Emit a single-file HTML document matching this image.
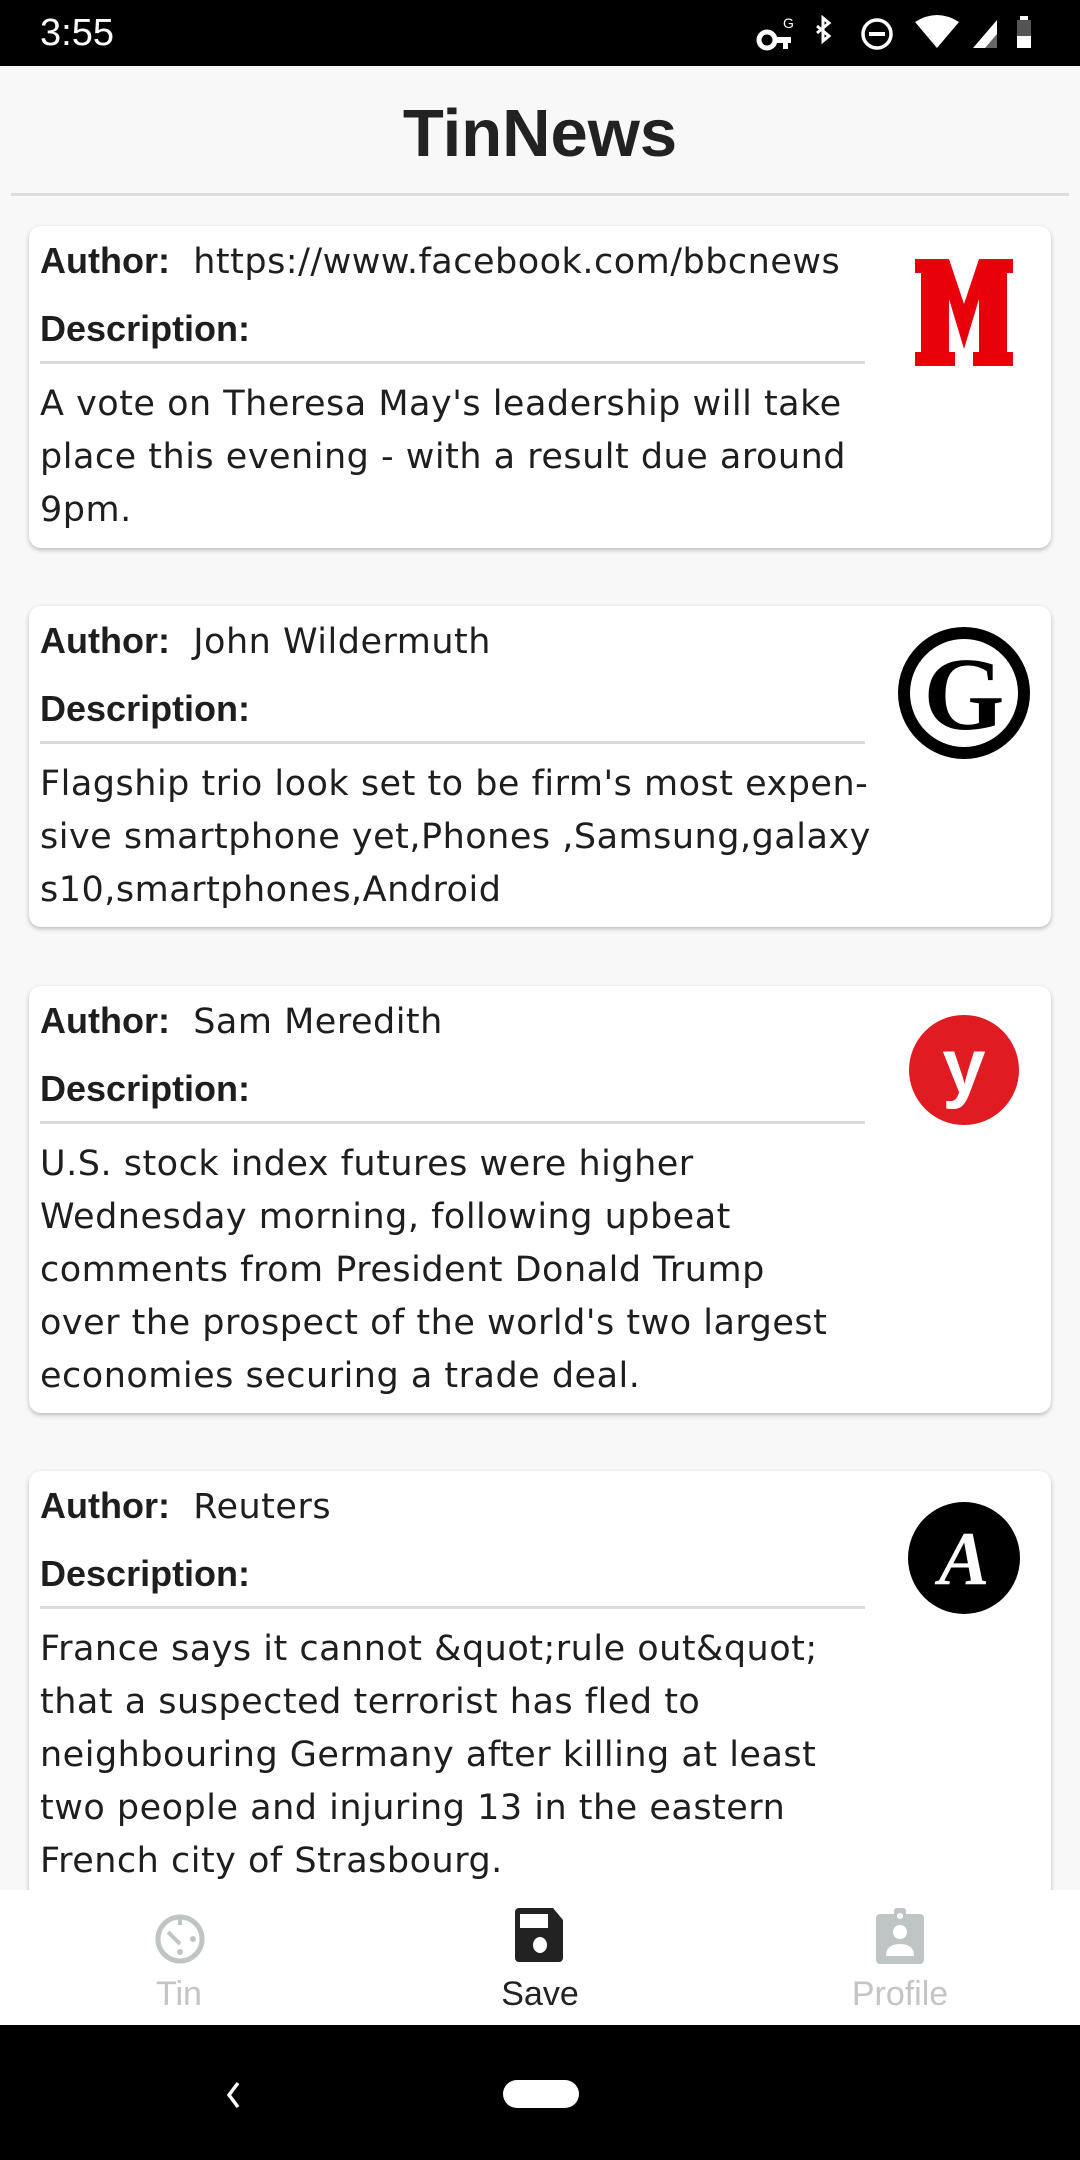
<!DOCTYPE html>
<html><head><meta charset="utf-8"><style>
*{margin:0;padding:0;box-sizing:border-box}
body{width:1080px;height:2160px;background:#f8f8f8;position:relative;overflow:hidden;font-family:"Liberation Sans","DejaVu Sans",sans-serif;color:#1e1e1e}
.abs{position:absolute}
.status{left:0;top:0;width:1080px;height:66px;background:#000;color:#fff}
.title{left:0;width:1080px;top:96px;text-align:center;font-size:67px;font-weight:bold;line-height:76px;color:#222}
.hr{left:11px;top:193px;width:1058px;height:3px;background:#dcdcdc}
.card{left:29px;width:1022px;background:#fff;border-radius:12px;box-shadow:0 2px 5px rgba(0,0,0,.25)}
.t{position:absolute;left:11px;font-size:35px;line-height:53px;white-space:nowrap;font-family:"DejaVu Sans",sans-serif;letter-spacing:0.5px}
.b{font-weight:bold;font-family:"Liberation Sans",sans-serif;font-size:36px;letter-spacing:0}
.div{position:absolute;left:11px;width:825px;height:3px;background:#dcdcdc}
.nav{left:0;top:1890px;width:1080px;height:135px;background:#fff}
.lbl{position:absolute;font-size:34px;top:1975px;width:200px;text-align:center}
</style></head><body>
<div class="abs status">
 <div class="abs" style="left:40px;top:10px;font-size:38px;line-height:46px">3:55</div>
 <svg class="abs" style="left:755px;top:12px" width="300" height="44" viewBox="0 0 300 44">
  <circle cx="12" cy="28" r="8" fill="none" stroke="#fff" stroke-width="5"/><rect x="18" y="25" width="18" height="6" fill="#fff"/><rect x="28" y="25" width="5" height="12" fill="#fff"/>
  <text x="28" y="16" fill="#fff" font-size="14" font-family="Liberation Sans">G</text>
  <path d="M62 14l12 10-6 5V6l6 5-12 10" fill="none" stroke="#fff" stroke-width="3"/>
  <circle cx="122" cy="22" r="14" fill="none" stroke="#fff" stroke-width="3.5"/><rect x="114" y="20" width="16" height="4" fill="#fff"/>
  <path d="M160 10q22-14 44 0l-22 26z" fill="#fff"/>
  <path d="M218 36l24-28v28z" fill="#fff"/><path d="M230 36l12-14v14z" fill="#666"/>
  <rect x="265" y="4" width="8" height="4" fill="#fff"/><rect x="262" y="8" width="14" height="28" fill="#555"/><rect x="262" y="24" width="14" height="12" fill="#fff"/>
 </svg>
</div>
<div class="abs title">TinNews</div>
<div class="abs hr"></div>

<div class="abs card" style="top:226px;height:322px">
 <div class="t" style="top:8px"><span class="b">Author:</span>&nbsp;&nbsp;https://www.facebook.com/bbcnews</div>
 <div class="t b" style="top:76px">Description:</div>
 <div class="div" style="top:135px"></div>
 <div class="t" style="top:152px">A vote on Theresa May's leadership will take<br>place this evening - with a result due around<br>9pm.</div>
 <svg class="abs" style="left:886px;top:33px" width="98" height="107" viewBox="0 0 98 107"><path d="M0 0h34l15 45 15-45h34v14h-6v79h6v14H58V93h6V40L49 90 34 40v53h6v14H0V93h6V14H0z" fill="#e8000a"/></svg>
</div>

<div class="abs card" style="top:606px;height:321px">
 <div class="t" style="top:8px"><span class="b">Author:</span>&nbsp;&nbsp;John Wildermuth</div>
 <div class="t b" style="top:76px">Description:</div>
 <div class="div" style="top:135px"></div>
 <div class="t" style="top:152px">Flagship trio look set to be firm's most expen-<br>sive smartphone yet,Phones ,Samsung,galaxy<br>s10,smartphones,Android</div>
 <svg class="abs" style="left:869px;top:21px" width="132" height="132" viewBox="0 0 132 132"><circle cx="66" cy="66" r="66" fill="#000"/><circle cx="66" cy="66" r="54" fill="#fff"/><text x="66" y="102" text-anchor="middle" font-size="104" font-weight="bold" font-family="Liberation Serif" fill="#000">G</text></svg>
</div>

<div class="abs card" style="top:986px;height:427px">
 <div class="t" style="top:8px"><span class="b">Author:</span>&nbsp;&nbsp;Sam Meredith</div>
 <div class="t b" style="top:76px">Description:</div>
 <div class="div" style="top:135px"></div>
 <div class="t" style="top:152px">U.S. stock index futures were higher<br>Wednesday morning, following upbeat<br>comments from President Donald Trump<br>over the prospect of the world's two largest<br>economies securing a trade deal.</div>
 <svg class="abs" style="left:880px;top:29px" width="110" height="110" viewBox="0 0 110 110"><circle cx="55" cy="55" r="55" fill="#e11b22"/><text x="55" y="78" text-anchor="middle" font-size="78" font-weight="bold" font-family="Liberation Sans" fill="#fff">y</text></svg>
</div>

<div class="abs card" style="top:1471px;height:460px">
 <div class="t" style="top:8px"><span class="b">Author:</span>&nbsp;&nbsp;Reuters</div>
 <div class="t b" style="top:76px">Description:</div>
 <div class="div" style="top:135px"></div>
 <div class="t" style="top:152px">France says it cannot &amp;quot;rule out&amp;quot;<br>that a suspected terrorist has fled to<br>neighbouring Germany after killing at least<br>two people and injuring 13 in the eastern<br>French city of Strasbourg.</div>
 <svg class="abs" style="left:879px;top:31px" width="112" height="112" viewBox="0 0 112 112"><circle cx="56" cy="56" r="56" fill="#000"/><text x="56" y="82" text-anchor="middle" font-size="76" font-weight="bold" font-style="italic" font-family="Liberation Serif" fill="#fff">A</text></svg>
</div>

<div class="abs nav"></div>
<svg class="abs" style="left:154px;top:1912px" width="52" height="52" viewBox="0 0 52 52"><circle cx="26" cy="27" r="22" fill="none" stroke="#bfc4c4" stroke-width="5"/><path d="M26 5v8M14 20l12 12" stroke="#bfc4c4" stroke-width="4"/><circle cx="26" cy="40" r="3" fill="#bfc4c4"/><circle cx="39" cy="27" r="3" fill="#bfc4c4"/></svg>
<div class="lbl" style="left:79px;color:#c4c4c4">Tin</div>
<svg class="abs" style="left:514px;top:1908px" width="52" height="54" viewBox="0 0 52 54"><path d="M5 0h34l10 12v38a4 4 0 0 1-4 4H5a4 4 0 0 1-4-4V4a4 4 0 0 1 4-4z" fill="#222"/><rect x="6" y="6" width="28" height="14" fill="#fff"/><ellipse cx="26" cy="37" rx="7" ry="8" fill="#fff"/></svg>
<div class="lbl" style="left:440px;color:#222">Save</div>
<svg class="abs" style="left:874px;top:1908px" width="52" height="56" viewBox="0 0 52 56"><rect x="2" y="6" width="48" height="50" rx="4" fill="#bfc4c4"/><rect x="20" y="0" width="12" height="10" rx="3" fill="#bfc4c4"/><circle cx="26" cy="8" r="3" fill="#fff"/><circle cx="26" cy="24" r="7" fill="#fff"/><path d="M12 48q0-12 14-12t14 12z" fill="#fff"/></svg>
<div class="lbl" style="left:800px;color:#c4c4c4">Profile</div>

<div class="abs" style="left:0;top:2025px;width:1080px;height:135px;background:#000"></div>
<svg class="abs" style="left:224px;top:2080px" width="20" height="30" viewBox="0 0 20 30"><path d="M14 3L5 15l9 12" fill="none" stroke="#fff" stroke-width="3.5"/></svg>
<div class="abs" style="left:503px;top:2080px;width:76px;height:28px;border-radius:14px;background:#fff"></div>
</body></html>
